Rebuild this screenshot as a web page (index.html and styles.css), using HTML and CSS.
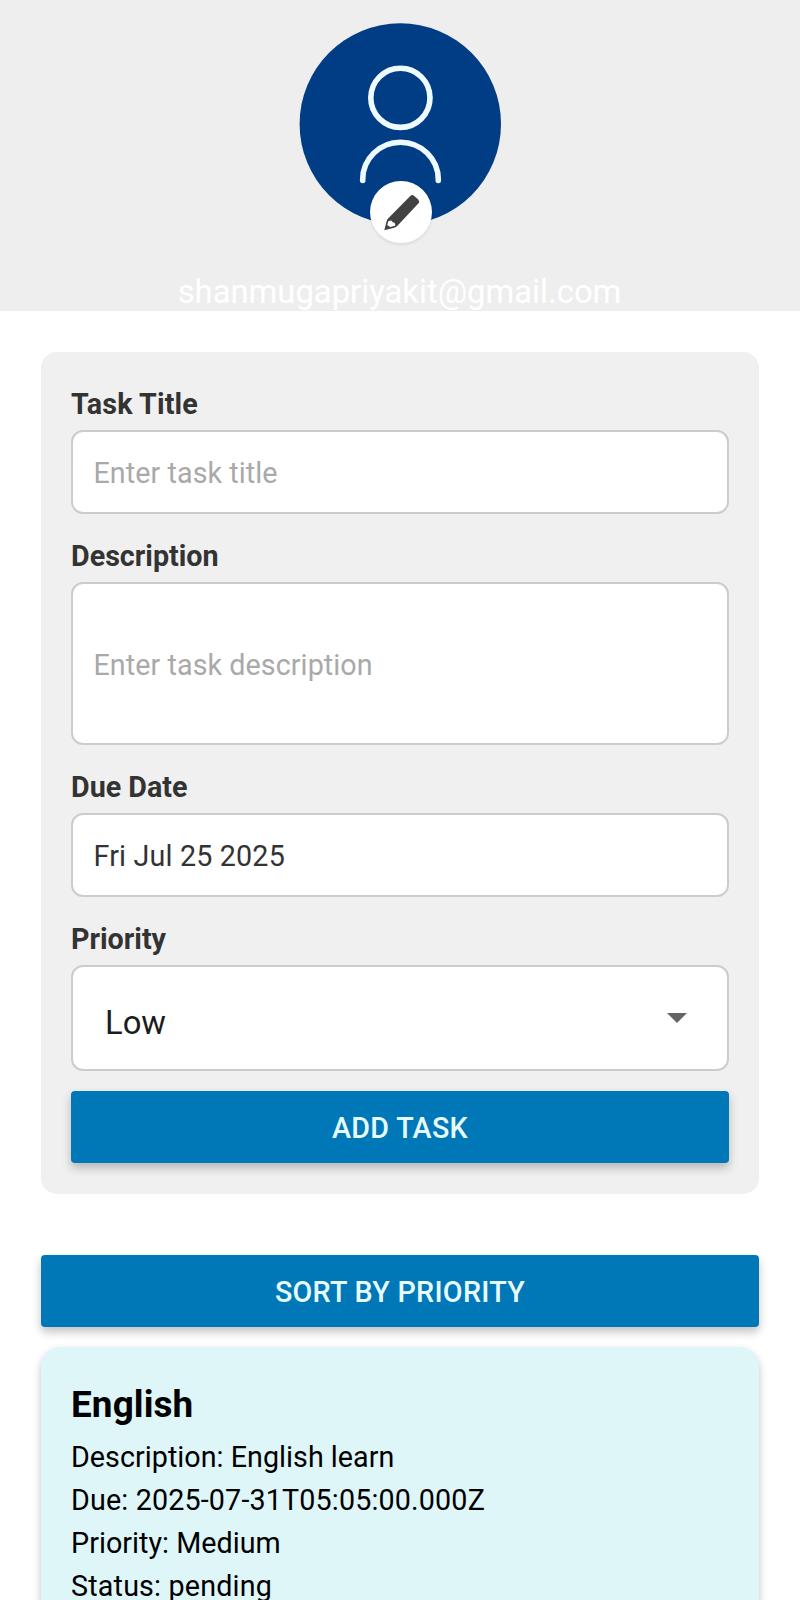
FILE: index.html
```html
<!DOCTYPE html>
<html lang="en">
<head>
<meta charset="utf-8">
<title>Tasks</title>
<link rel="stylesheet" href="styles.css">
</head>
<body>
<div class="screen">
  <header class="profile">
    <div class="avatar">
      <svg class="avatar-art" viewBox="0 0 202 202" fill="none" stroke="#edfaff" stroke-width="5.6">
        <circle cx="101.3" cy="101" r="100.7" fill="#003d84" stroke="none"/>
        <circle cx="101.4" cy="74.8" r="29.6"/>
        <path d="M63.7 157.5V156.5a37.8 37.3 0 0 1 75.6 0V157.5" stroke-linecap="round"/>
      </svg>
      <div class="edit-badge">
        <svg class="pencil" viewBox="0 0 37 37">
          <path d="M1.3 36.3 3.6 27.2Q4.1 25.5 5.3 24.3L27.3 2Q29 .2 31 1.7L35.2 5.6Q37 7.6 35.3 9.6L14.2 32Q13 33.3 11.2 33.7Z" fill="#424242"/>
          <path d="M5.4 27.3Q8.9 25.2 9.6 28.2 12.9 28.3 12.1 31.8L7.1 33.1 4.2 30.9Z" fill="#fff"/>
        </svg>
      </div>
    </div>
    <div class="email">shanmugapriyakit@gmail.com</div>
  </header>
  <main class="content">
    <form class="form-card">
      <label class="label title-label">Task Title</label>
      <div class="field placeholder">Enter task title</div>
      <label class="label">Description</label>
      <div class="field tall placeholder">Enter task description</div>
      <label class="label">Due Date</label>
      <div class="field date">Fri Jul 25 2025</div>
      <label class="label">Priority</label>
      <div class="field picker">
        <span>Low</span>
        <svg class="caret" viewBox="0 0 20 10"><path d="M0 0H20L10 10Z" fill="#656565"/></svg>
      </div>
      <button class="button" type="button">ADD TASK</button>
    </form>
    <button class="button sort" type="button">SORT BY PRIORITY</button>
    <article class="task">
      <h2 class="task-title">English</h2>
      <p class="task-line">Description: English learn</p>
      <p class="task-line due">Due: 2025-07-31T05:05:00.000Z</p>
      <p class="task-line">Priority: Medium</p>
      <p class="task-line status">Status: pending</p>
    </article>
  </main>
</div>
</body>
</html>
```

FILE: styles.css
```css
* { box-sizing: border-box; }
body { margin: 0; background: #fff; font-family: Roboto, "Liberation Sans", sans-serif; font-size: 28.7px; color: #000; }
.screen { height: 1600px; overflow: hidden; }
.profile { height: 311px; padding-top: 23px; background: #eee; display: flex; flex-direction: column; align-items: center; }
.avatar { position: relative; width: 202px; height: 202px; }
.avatar-art { display: block; width: 202px; height: 202px; }
.edit-badge { position: absolute; left: 71px; top: 158px; width: 62px; height: 62px; border-radius: 50%; background: #fff; box-shadow: 0 2px 3px rgba(0,0,0,.08); display: flex; align-items: center; justify-content: center; }
.pencil { width: 37px; height: 37px; }
.email { margin-top: 48px; padding-right: 1px; line-height: 38px; font-size: 32.8px; color: #fff; white-space: nowrap; }
.content { padding: 41px; }
.form-card { background: #f0f0f0; border-radius: 16px; height: 842px; padding: 30px; }
.label { display: block; height: 48px; padding-top: 4.6px; line-height: 34px; font-weight: 700; color: #333; }
.title-label { letter-spacing: .13px; }
.field { height: 84px; margin-bottom: 20px; padding: 2px 20.5px 0; border: 2px solid #ccc; border-radius: 12px; background: #fff; display: flex; align-items: center; color: #333; line-height: 34px; }
.tall { height: 163px; }
.placeholder { color: #a9a9a9; letter-spacing: .07px; }
.date { letter-spacing: .17px; }
.picker { height: 106px; padding: 9px 40px 0 32px; justify-content: space-between; font-size: 32.8px; color: #1c1c1c; }
.caret { width: 20px; height: 10px; margin-top: -9px; }
.button { display: flex; align-items: center; justify-content: center; width: 100%; height: 72px; padding: 2px 0 0; border: 0; border-radius: 4px; background: #0077b6; color: #e6fbff; font: 500 28.7px/34px Roboto, "Liberation Sans", sans-serif; letter-spacing: .3px; box-shadow: 0 5px 10px rgba(0,0,0,.24); }
.sort { margin: 61px 0 20px; }
.task { height: 300px; padding: 30px; border-radius: 20px; background: #dff6f9; box-shadow: 0 4px 9px rgba(0,0,0,.24); }
.task-title { margin: 0 0 9px; padding-top: 6px; font-size: 36.9px; line-height: 43px; font-weight: 700; letter-spacing: .1px; }
.task-line { margin: 0; padding-top: .7px; line-height: 42.4px; letter-spacing: .03px; }
.due { letter-spacing: .15px; }
.status { letter-spacing: .18px; }
```
